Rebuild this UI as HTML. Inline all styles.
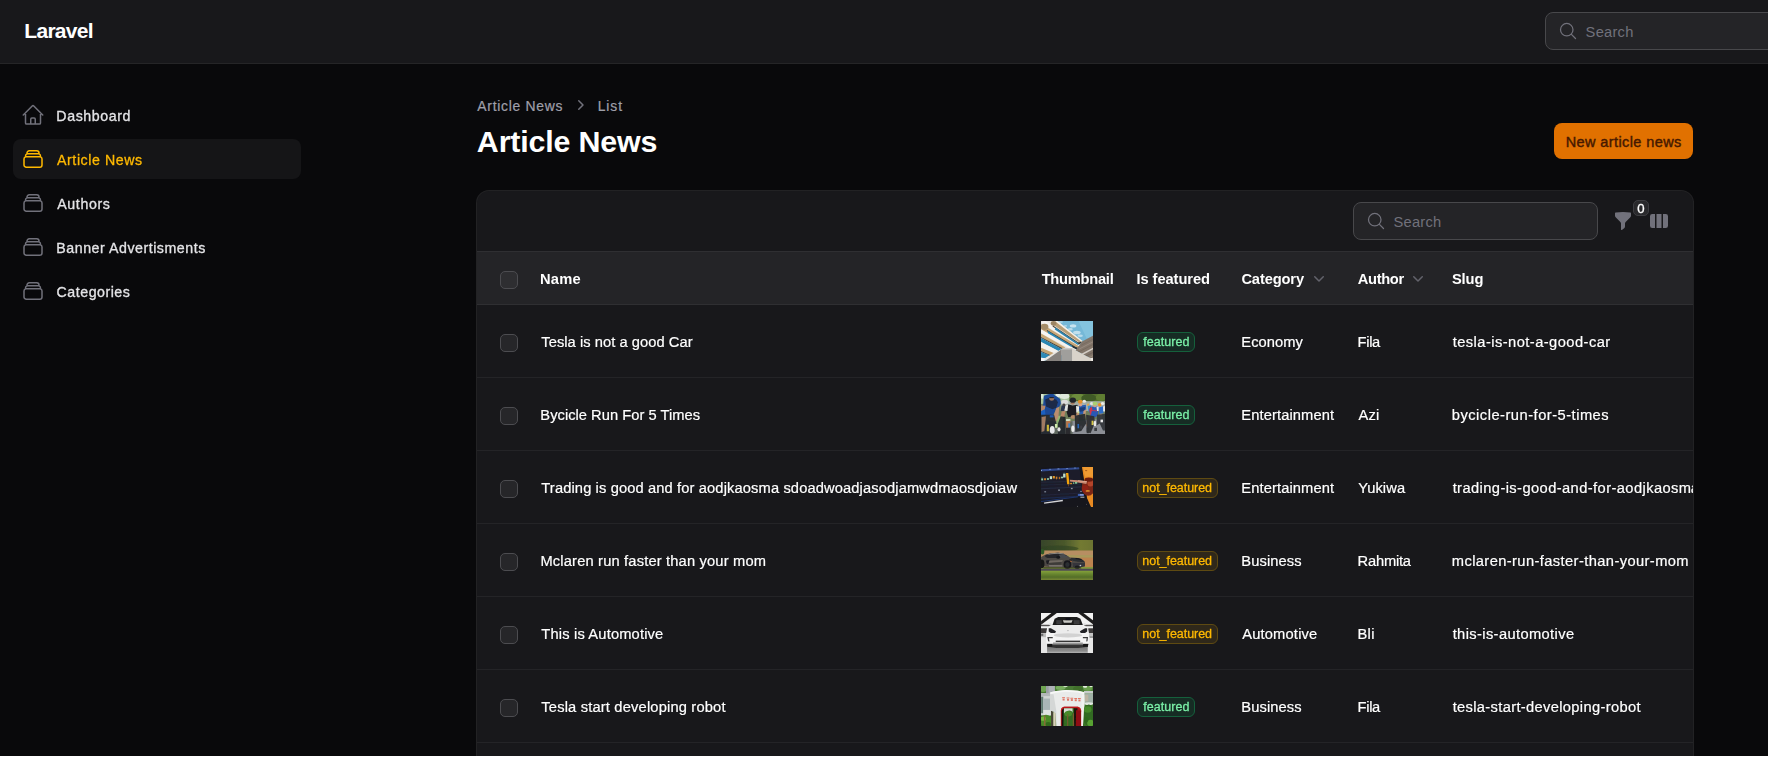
<!DOCTYPE html>
<html lang="en">
<head>
<meta charset="utf-8">
<title>Article News - Laravel</title>
<style>
*{box-sizing:border-box}
html,body{margin:0;padding:0;background:#fff}
body{width:1768px;height:774px;overflow:hidden;position:relative;font-family:"Liberation Sans",sans-serif;font-size:14px;color:#fff}
#app{position:absolute;left:0;top:0;width:1768px;height:756px;background:#09090b;overflow:hidden}
.abs{position:absolute}
.t{position:absolute;white-space:pre;line-height:20px;z-index:5}
#glayer{position:absolute;left:0;top:0;width:1768px;height:756px;will-change:transform;z-index:5}
svg{display:block;position:absolute}
/* topbar */
#topbar{position:absolute;left:0;top:0;width:1768px;height:63px;background:#18181b}
#topline{position:absolute;left:0;top:63px;width:1768px;height:1px;background:#252527}
.input{position:absolute;background:#242427;border:1px solid #48484b;border-radius:8px}
/* sidebar */
.nav-active{position:absolute;left:13px;top:139px;width:288px;height:40px;border-radius:8px;background:#151517}
/* button */
#newbtn{position:absolute;left:1554px;top:123px;width:139px;height:36px;border-radius:8px;background:#e17100}
/* table */
#card{position:absolute;left:476px;top:190px;width:1218px;height:640px;border-radius:13px;background:#222224}
#cardin{position:absolute;left:1px;top:1px;width:1216px;height:640px;border-radius:12px 12px 0 0;background:#18181b;overflow:hidden}
.hline{position:absolute;left:0;width:1216px;height:1px}
#thead{position:absolute;left:0;top:61px;width:1216px;height:52px;background:#242427}
.cb{position:absolute;width:18px;height:18px;border-radius:5px;border:1px solid #4c4c50;background:#262629}
.badge{position:absolute;height:20px;border-radius:6px;border:1px solid}
.badge.g{background:#162c24;border-color:#15603c}
.badge.y{background:#2f281a;border-color:#5e4a12}
#mask{position:absolute;left:1694px;top:64px;width:74px;height:700px;background:#09090b;z-index:9}
.thumb{position:absolute;overflow:hidden}
</style>
</head>
<body>
<div id="app">
  <header id="topbar"></header>
  <div id="topline"></div>
  <div class="input" style="left:1545px;top:12px;width:260px;height:38px"></div>
  <svg style="left:1558px;top:21px" width="20" height="20" viewBox="0 0 24 24" fill="none" stroke="#71717b" stroke-width="1.5" stroke-linecap="round" stroke-linejoin="round"><path d="m21 21-5.197-5.197m0 0A7.5 7.5 0 1 0 5.196 5.196a7.5 7.5 0 0 0 10.607 10.607Z"/></svg>

  <nav id="sidebar">
    <div class="nav-active"></div>
    <svg style="left:21px;top:103px" width="24" height="24" viewBox="0 0 24 24" fill="none" stroke="#71717b" stroke-width="1.5" stroke-linecap="round" stroke-linejoin="round"><path d="m2.25 12 8.954-8.955c.44-.439 1.152-.439 1.591 0L21.75 12M4.5 9.75v10.125c0 .621.504 1.125 1.125 1.125H9.75v-4.875c0-.621.504-1.125 1.125-1.125h2.25c.621 0 1.125.504 1.125 1.125V21h4.125c.621 0 1.125-.504 1.125-1.125V9.75M8.25 21h8.25"/></svg>
    <svg style="left:21px;top:147px" width="24" height="24" viewBox="0 0 24 24" fill="none" stroke="#ffb900" stroke-width="1.5" stroke-linecap="round" stroke-linejoin="round"><path d="M6 6.878V6a2.25 2.25 0 0 1 2.25-2.25h7.5A2.25 2.25 0 0 1 18 6v.878m-12 0c.235-.083.487-.128.75-.128h10.5c.263 0 .515.045.75.128m-12 0A2.25 2.25 0 0 0 4.500 9v.878m13.500-3A2.250 2.250 0 0 1 19.500 9v.878m0 0a2.246 2.246 0 0 0-.75-.128H5.250c-.263 0-.515.045-.75.128m15 0A2.250 2.250 0 0 1 21 12v6a2.250 2.250 0 0 1-2.250 2.250H5.250A2.250 2.250 0 0 1 3 18v-6c0-.98.626-1.813 1.500-2.122"/></svg>
    <svg style="left:21px;top:191px" width="24" height="24" viewBox="0 0 24 24" fill="none" stroke="#71717b" stroke-width="1.5" stroke-linecap="round" stroke-linejoin="round"><path d="M6 6.878V6a2.25 2.25 0 0 1 2.25-2.25h7.5A2.25 2.25 0 0 1 18 6v.878m-12 0c.235-.083.487-.128.75-.128h10.5c.263 0 .515.045.75.128m-12 0A2.25 2.25 0 0 0 4.500 9v.878m13.500-3A2.250 2.250 0 0 1 19.500 9v.878m0 0a2.246 2.246 0 0 0-.75-.128H5.250c-.263 0-.515.045-.75.128m15 0A2.250 2.250 0 0 1 21 12v6a2.250 2.250 0 0 1-2.250 2.250H5.250A2.250 2.250 0 0 1 3 18v-6c0-.98.626-1.813 1.500-2.122"/></svg>
    <svg style="left:21px;top:235px" width="24" height="24" viewBox="0 0 24 24" fill="none" stroke="#71717b" stroke-width="1.5" stroke-linecap="round" stroke-linejoin="round"><path d="M6 6.878V6a2.25 2.25 0 0 1 2.25-2.25h7.5A2.25 2.25 0 0 1 18 6v.878m-12 0c.235-.083.487-.128.75-.128h10.5c.263 0 .515.045.75.128m-12 0A2.25 2.25 0 0 0 4.500 9v.878m13.500-3A2.250 2.250 0 0 1 19.500 9v.878m0 0a2.246 2.246 0 0 0-.75-.128H5.250c-.263 0-.515.045-.75.128m15 0A2.250 2.250 0 0 1 21 12v6a2.250 2.250 0 0 1-2.250 2.250H5.250A2.250 2.250 0 0 1 3 18v-6c0-.98.626-1.813 1.500-2.122"/></svg>
    <svg style="left:21px;top:279px" width="24" height="24" viewBox="0 0 24 24" fill="none" stroke="#71717b" stroke-width="1.5" stroke-linecap="round" stroke-linejoin="round"><path d="M6 6.878V6a2.25 2.25 0 0 1 2.25-2.25h7.5A2.25 2.25 0 0 1 18 6v.878m-12 0c.235-.083.487-.128.75-.128h10.5c.263 0 .515.045.75.128m-12 0A2.25 2.25 0 0 0 4.500 9v.878m13.500-3A2.250 2.250 0 0 1 19.500 9v.878m0 0a2.246 2.246 0 0 0-.75-.128H5.250c-.263 0-.515.045-.75.128m15 0A2.250 2.250 0 0 1 21 12v6a2.250 2.250 0 0 1-2.250 2.250H5.250A2.250 2.250 0 0 1 3 18v-6c0-.98.626-1.813 1.500-2.122"/></svg>

  </nav>

  <!-- breadcrumb chevron -->
  <svg style="left:570px;top:95px" width="20" height="20" viewBox="0 0 20 20" fill="#71717b"><path fill-rule="evenodd" clip-rule="evenodd" d="M8.22 5.22a.75.75 0 0 1 1.06 0l4.25 4.25a.75.75 0 0 1 0 1.06l-4.25 4.25a.75.75 0 0 1-1.06-1.06L11.94 10 8.22 6.28a.75.75 0 0 1 0-1.06Z"/></svg>

  <div id="newbtn"></div>

  <section id="card"><div id="cardin">
    <div class="hline" style="top:60px;background:#2f2f32"></div>
    <div id="thead"></div>
    <div class="hline" style="top:113px;background:#2f2f32"></div>
    <div class="cb" style="left:23px;top:80px;background:#2e2e31"></div>
    <div class="cb" style="left:23px;top:143px"></div>
    <div class="thumb" id="th0" style="left:564px;top:130px;width:52px;height:40px;background:#888"><svg width="52" height="40" viewBox="0 0 52 40" style="left:0;top:0"><defs><filter id="bl0" x="-10%" y="-10%" width="120%" height="120%"><feGaussianBlur stdDeviation="0.4"/></filter></defs><g filter="url(#bl0)"><rect x="-1.00" y="-1.00" width="54.26" height="42.32" fill="#74b8d7" /><polygon points="36.98,-1.00 53.26,-1.00 53.26,15.28 45.66,17.45" fill="#84c3de" /><ellipse cx="32.10" cy="4.97" rx="3.26" ry="1.63" fill="#d6eaf3" opacity="0.85"/><ellipse cx="29.39" cy="8.23" rx="2.44" ry="1.19" fill="#d6eaf3" opacity="0.7"/><ellipse cx="35.90" cy="11.48" rx="3.80" ry="1.74" fill="#d6eaf3" opacity="0.8"/><ellipse cx="39.15" cy="14.74" rx="2.71" ry="1.19" fill="#d6eaf3" opacity="0.7"/><ellipse cx="24.50" cy="4.97" rx="1.63" ry="0.87" fill="#d6eaf3" opacity="0.6"/><ellipse cx="19.62" cy="0.90" rx="2.44" ry="0.76" fill="#d6eaf3" opacity="0.7"/><polygon points="-1.00,-1.00 15.28,-1.00 41.05,20.27 34.81,29.39 -1.00,41.32" fill="#e9e6e1" /><polygon points="3.34,-1.00 39.42,24.50 38.88,26.02 0.09,1.71" fill="#f5f3f0" /><polygon points="15.55,-0.35 41.32,20.27 39.15,22.06 10.67,2.80" fill="#b99e75" /><polygon points="15.28,-1.00 41.60,19.89 40.51,20.71 13.65,-0.02" fill="#f4f1ec" /><ellipse cx="12.57" cy="2.37" rx="2.82" ry="2.28" fill="#9b8463" /><polygon points="12.02,4.43 38.88,22.44 38.18,23.31 11.59,5.40" fill="#4a4238" /><polygon points="14.47,6.60 38.07,22.88 36.98,24.07 13.76,8.50" fill="#2a84b0" /><polygon points="0.63,3.07 38.88,25.70 36.44,27.22 0.09,9.04" fill="#c6a677" /><ellipse cx="3.61" cy="5.78" rx="3.80" ry="3.15" fill="#a58d69" /><polygon points="6.06,9.04 36.44,26.95 34.81,27.76 5.78,10.12" fill="#3c3a36" /><polygon points="6.60,9.85 31.56,25.05 29.39,26.95 7.14,13.11" fill="#2c88b4" /><polygon points="0.09,8.23 32.10,26.95 28.30,27.22 0.09,12.57" fill="#f6f4f1" /><polygon points="0.09,12.57 24.50,26.40 21.79,27.49 0.09,15.93" fill="#c9a876" /><polygon points="0.09,15.93 21.79,27.33 20.71,28.30 0.09,16.91" fill="#4b4439" /><polygon points="0.09,16.91 20.71,28.03 16.91,29.93 0.09,20.98" fill="#2b86b3" /><polygon points="0.09,20.98 17.18,29.66 12.57,32.10 0.09,26.78" fill="#f3f1ee" /><polygon points="0.09,26.78 12.57,31.99 9.31,34.00 0.09,29.93" fill="#c5a472" /><polygon points="0.09,29.93 9.31,33.89 8.23,34.54 0.09,31.01" fill="#4a4238" /><polygon points="0.09,31.01 8.50,34.27 3.88,37.25 0.09,36.98" fill="#2d89b6" /><polygon points="-1.00,36.44 4.16,37.25 2.26,41.32 -1.00,41.32" fill="#f4f4f6" /><polygon points="31.01,25.05 38.07,27.22 36.44,28.84 31.56,26.40" fill="#22313b" /><polygon points="36.98,21.52 40.78,20.71 40.24,22.06 37.80,23.42" fill="#2f3a40" /><polygon points="41.05,20.43 53.26,14.09 53.26,36.98 49.46,37.25 34.54,29.50" fill="#83766b" /><line x1="53.26" y1="17.45" x2="40.24" y2="24.29" stroke="#6e6258" stroke-width="0.49" /><line x1="53.26" y1="20.16" x2="38.07" y2="28.14" stroke="#9e9186" stroke-width="0.76" /><line x1="53.26" y1="22.88" x2="36.98" y2="31.39" stroke="#6c6056" stroke-width="0.54" /><line x1="53.26" y1="26.95" x2="40.78" y2="33.51" stroke="#d3ccc4" stroke-width="1.52" /><line x1="53.26" y1="30.74" x2="44.58" y2="35.30" stroke="#74685e" stroke-width="1.19" /><line x1="53.26" y1="34.00" x2="47.84" y2="36.82" stroke="#a39789" stroke-width="0.65" /><polygon points="2.26,41.32 20.71,28.30 20.71,41.32" fill="#86827e" /><polygon points="31.01,26.95 34.81,29.39 49.46,37.25 53.26,36.98 53.26,41.32 31.01,41.32" fill="#d9d3ca" /><rect x="20.71" y="27.65" width="10.31" height="13.67" fill="#a09f9c" /><rect x="20.71" y="27.65" width="10.31" height="0.92" fill="#c4c2bf" /><polygon points="49.46,37.25 53.26,36.44 53.26,41.32 51.09,41.32" fill="#efebe6" /></g></svg></div>
    <div class="badge g" style="left:660px;top:141px;width:58px"></div>
    <div class="hline" style="top:186px;background:#242427"></div>
    <div class="cb" style="left:23px;top:216px"></div>
    <div class="thumb" id="th1" style="left:564px;top:203px;width:64px;height:40px;background:#888"><svg width="64" height="40" viewBox="0 0 64 40" style="left:0;top:0"><defs><filter id="bl1" x="-10%" y="-10%" width="120%" height="120%"><feGaussianBlur stdDeviation="0.7"/></filter></defs><g filter="url(#bl1)"><rect x="-1.00" y="-1.00" width="66.23" height="42.35" fill="#6f7f5a" /><rect x="-1.00" y="-1.00" width="30.40" height="10.86" fill="#a8c49c" /><rect x="28.32" y="-1.00" width="36.92" height="10.31" fill="#55702f" /><ellipse cx="37.00" cy="2.80" rx="6.51" ry="3.26" fill="#6d8c3c" /><ellipse cx="47.86" cy="3.89" rx="7.60" ry="3.80" fill="#3f5a26" /><ellipse cx="59.80" cy="3.34" rx="4.89" ry="3.80" fill="#5f7d30" /><ellipse cx="23.43" cy="2.26" rx="4.89" ry="2.71" fill="#dfe9dc" /><ellipse cx="16.92" cy="1.17" rx="2.17" ry="2.17" fill="#e9efe8" /><ellipse cx="1.17" cy="2.26" rx="1.63" ry="2.71" fill="#dbe8d4" /><rect x="19.63" y="7.14" width="45.60" height="9.77" fill="#b9c0c6" opacity="0.75"/><polygon points="29.40,27.23 65.23,24.52 65.23,41.35 29.40,41.35" fill="#8c8f96" /><rect x="-1.00" y="27.23" width="32.57" height="14.12" fill="#5f675f" /><rect x="15.29" y="21.80" width="6.51" height="11.94" fill="#9fd07a" opacity="0.7"/><ellipse cx="43.25" cy="7.25" rx="1.85" ry="1.52" fill="#e6e6e6" /><ellipse cx="61.54" cy="9.42" rx="1.85" ry="1.52" fill="#ecebe6" /><ellipse cx="50.58" cy="9.59" rx="1.63" ry="1.52" fill="#dfe3e3" /><ellipse cx="47.05" cy="10.67" rx="0.98" ry="1.19" fill="#e8a23a" /><polygon points="46.78,12.03 50.03,11.22 50.58,16.92 47.32,17.46" fill="#3d8fd0" /><polygon points="37.82,11.76 44.88,10.67 45.15,15.29 43.52,19.63 38.36,20.72" fill="#2a5cae" /><polygon points="38.63,13.66 44.06,13.12 43.52,16.92 38.90,17.73" fill="#1e3c78" /><ellipse cx="39.45" cy="10.84" rx="1.74" ry="1.63" fill="#d8a08a" /><ellipse cx="39.17" cy="7.69" rx="2.39" ry="1.95" fill="#e5902b" /><polygon points="42.43,16.92 45.15,15.29 44.06,24.52 41.89,25.06" fill="#c89878" /><polygon points="49.22,12.84 57.36,12.30 57.09,20.72 54.38,23.43 49.76,22.35 48.13,16.92" fill="#2c58b4" /><polygon points="48.13,15.29 50.58,12.57 51.39,15.29 49.49,21.80" fill="#d2344c" /><polygon points="55.46,12.57 57.63,12.57 57.36,16.92 56.00,16.92" fill="#e9e2e4" /><line x1="50.58" y1="16.37" x2="56.00" y2="16.92" stroke="#b83a55" stroke-width="0.98" /><ellipse cx="53.83" cy="12.03" rx="1.63" ry="1.30" fill="#caa08a" /><ellipse cx="54.10" cy="9.59" rx="2.39" ry="1.95" fill="#a9d070" /><ellipse cx="49.49" cy="23.16" rx="1.41" ry="1.19" fill="#d7303c" /><polygon points="46.78,21.80 49.22,22.35 46.78,32.66 45.15,32.12" fill="#c2906e" /><polygon points="57.90,13.39 62.25,12.30 62.52,19.09 58.18,20.45" fill="#2f6cc6" /><ellipse cx="58.61" cy="10.67" rx="1.74" ry="1.74" fill="#e88f28" /><polygon points="61.98,12.57 64.15,12.03 64.15,17.46 62.25,17.46" fill="#e8e6e6" /><polygon points="58.72,19.63 61.43,19.63 60.89,24.52 58.99,24.52" fill="#c49a7c" /><ellipse cx="23.70" cy="7.96" rx="3.37" ry="2.17" fill="#dcdcdc" /><polygon points="20.45,11.49 24.52,10.67 23.70,16.92 19.63,16.92" fill="#2a3650" /><ellipse cx="22.89" cy="10.67" rx="1.41" ry="1.19" fill="#4a4040" /><polygon points="2.80,1.72 7.14,0.36 14.74,1.72 19.36,4.97 19.90,9.86 17.73,13.39 15.29,15.29 12.57,20.72 2.26,21.80 0.09,20.72 0.09,16.92 2.26,9.86" fill="#1f4a96" /><polygon points="4.16,5.52 7.69,3.89 15.29,5.52 16.92,8.23 15.29,13.66 11.49,15.29 4.97,12.57" fill="#1a2a4a" /><polygon points="0.09,11.49 4.43,11.76 2.80,20.72 0.09,20.17" fill="#b3876b" /><polygon points="15.29,13.93 18.27,12.84 17.46,22.89 15.29,27.23 12.03,27.23 12.57,21.80" fill="#bb8d70" /><ellipse cx="10.67" cy="4.70" rx="2.50" ry="1.95" fill="#9c7560" /><ellipse cx="10.51" cy="1.61" rx="3.37" ry="1.95" fill="#1d4a97" /><rect x="8.50" y="3.07" width="4.34" height="1.09" fill="#1b1d24" /><polygon points="0.09,16.92 3.89,15.29 4.43,20.72 0.09,21.80" fill="#1c5fc0" /><polygon points="26.96,10.13 31.57,11.49 36.19,10.67 37.27,13.12 36.46,18.55 34.56,22.07 27.23,23.16 25.60,18.00 26.15,12.57" fill="#1c1e22" /><polygon points="35.10,11.76 38.09,12.84 37.82,18.55 35.27,18.82" fill="#e8e9e6" /><polygon points="24.52,11.76 27.23,10.13 26.42,16.92 23.32,16.48" fill="#e2e4e2" /><polygon points="35.48,18.55 38.20,18.55 37.27,29.95 34.94,29.40" fill="#bd8c6c" /><polygon points="20.72,17.46 24.52,16.64 23.16,23.16 19.52,22.45" fill="#b98668" /><ellipse cx="31.57" cy="9.32" rx="1.95" ry="1.41" fill="#a87c64" /><ellipse cx="31.85" cy="6.17" rx="3.15" ry="2.61" fill="#24272c" /><rect x="36.46" y="17.46" width="1.90" height="1.74" fill="#cfe08a" /><ellipse cx="32.23" cy="22.89" rx="2.61" ry="1.95" fill="#b48a66" /><rect x="25.06" y="25.06" width="4.34" height="2.17" fill="#cfe0c8" /><polygon points="25.06,27.23 29.40,26.69 28.59,34.29 25.33,34.29" fill="#b9764a" /><rect x="27.23" y="29.40" width="1.90" height="4.34" fill="#3b7ec4" /><polygon points="0.09,20.72 13.12,20.72 15.29,29.40 12.03,41.35 0.09,41.35" fill="#23272c" opacity="0.92"/><rect x="8.77" y="21.26" width="3.80" height="2.17" fill="#1f57b2" /><polygon points="0.63,22.89 4.97,22.35 3.34,37.00 0.63,38.09" fill="#a07a62" /><rect x="5.79" y="30.76" width="2.17" height="6.51" fill="#c9b53a" /><ellipse cx="11.22" cy="35.92" rx="2.50" ry="3.80" fill="#e6e6e8" /><rect x="13.93" y="29.95" width="2.17" height="3.80" fill="#cfe8b0" /><polygon points="19.63,22.35 24.52,22.89 24.52,41.35 16.92,41.35 16.92,29.40" fill="#22252a" opacity="0.92"/><ellipse cx="18.00" cy="35.37" rx="1.52" ry="2.17" fill="#e4e4e4" /><polygon points="25.06,33.75 29.40,33.75 29.40,41.35 24.52,41.35" fill="#2b2b2e" /><ellipse cx="31.85" cy="34.83" rx="1.63" ry="3.26" fill="#ececec" /><polygon points="33.75,21.80 44.06,19.63 45.15,29.40 40.26,37.00 34.29,38.09" fill="#25282c" opacity="0.92"/><rect x="36.46" y="29.95" width="1.63" height="4.34" fill="#2a68b8" /><polygon points="45.15,20.72 53.29,22.35 53.83,29.40 49.49,39.17 45.69,38.09" fill="#2a2d31" opacity="0.92"/><rect x="50.58" y="26.69" width="1.90" height="4.34" fill="#d8c84a" /><ellipse cx="53.94" cy="29.40" rx="1.41" ry="2.71" fill="#e8e8e8" /><polygon points="56.00,20.72 64.15,19.63 64.15,36.46 61.98,36.46 58.72,29.40 55.46,31.57" fill="#30343a" opacity="0.92"/><rect x="59.53" y="25.60" width="2.44" height="2.71" fill="#ededed" /><rect x="53.29" y="33.75" width="2.71" height="3.26" fill="#3a3d42" /><rect x="45.69" y="33.75" width="2.17" height="5.43" fill="#2d3034" /><rect x="39.17" y="31.57" width="2.17" height="3.26" fill="#3a3d42" /></g></svg></div>
    <div class="badge g" style="left:660px;top:214px;width:58px"></div>
    <div class="hline" style="top:259px;background:#242427"></div>
    <div class="cb" style="left:23px;top:289px"></div>
    <div class="thumb" id="th2" style="left:564px;top:276px;width:52px;height:40px;background:#888"><svg width="52" height="40" viewBox="0 0 52 40" style="left:0;top:0"><defs><filter id="bl2" x="-10%" y="-10%" width="120%" height="120%"><feGaussianBlur stdDeviation="0.55"/></filter></defs><g filter="url(#bl2)"><rect x="-1.00" y="-1.00" width="54.26" height="42.32" fill="#1b1e2c" /><polygon points="-1.00,-1.00 40.24,-1.00 40.24,0.63 -1.00,2.26" fill="#14151b" /><polygon points="-1.00,2.15 38.34,0.20 38.34,2.15 -1.00,4.43" fill="#30498c" /><ellipse cx="9.04" cy="2.30" rx="1.19" ry="0.54" fill="#6783c0" /><ellipse cx="17.45" cy="1.88" rx="1.19" ry="0.54" fill="#6783c0" /><ellipse cx="26.13" cy="1.44" rx="1.19" ry="0.54" fill="#6783c0" /><ellipse cx="34.00" cy="1.05" rx="1.19" ry="0.54" fill="#6783c0" /><ellipse cx="0.52" cy="3.45" rx="0.54" ry="0.54" fill="#a8c0f0" /><line x1="-1.00" y1="15.28" x2="40.24" y2="14.19" stroke="#262a3c" stroke-width="0.76" /><line x1="-1.00" y1="17.99" x2="40.24" y2="16.91" stroke="#23273a" stroke-width="0.76" /><line x1="-1.00" y1="21.79" x2="40.24" y2="19.89" stroke="#2a2f47" stroke-width="0.76" /><line x1="-1.00" y1="28.30" x2="40.24" y2="26.13" stroke="#242840" stroke-width="0.76" /><line x1="-1.00" y1="31.56" x2="40.24" y2="29.12" stroke="#20305c" stroke-width="0.76" /><polygon points="-1.00,33.73 38.07,29.39 45.66,29.39 51.09,41.32 -1.00,41.32" fill="#16171b" /><line x1="0.09" y1="34.54" x2="36.98" y2="29.82" stroke="#1f3878" stroke-width="0.87" /><line x1="3.07" y1="36.17" x2="21.79" y2="33.46" stroke="#d4d4d8" stroke-width="1.41" /><polygon points="40.51,-1.00 53.26,-1.00 53.26,41.32 50.55,41.32 46.21,31.56 44.04,21.79 42.41,12.02" fill="#e88a22" /><polygon points="41.87,-1.00 53.26,-1.00 53.26,9.85 44.04,9.85" fill="#f2a238" opacity="0.7"/><ellipse cx="45.12" cy="3.61" rx="1.19" ry="0.54" fill="#a85a18" /><polygon points="38.34,-1.00 40.78,-1.00 43.06,13.11 45.66,29.39 42.41,29.39 40.24,15.28" fill="#15161a" /><ellipse cx="47.29" cy="20.16" rx="6.51" ry="8.68" fill="#7b2716" /><ellipse cx="49.46" cy="16.36" rx="2.98" ry="3.26" fill="#b8472c" opacity="0.92"/><ellipse cx="44.04" cy="21.79" rx="3.26" ry="3.80" fill="#8e2414" /><ellipse cx="46.75" cy="23.96" rx="2.17" ry="0.87" fill="#d88a28" /><ellipse cx="47.84" cy="12.57" rx="4.34" ry="2.17" fill="#6b1f10" /><polygon points="28.57,12.67 36.98,13.22 45.94,14.30 45.39,17.02 36.98,15.55 29.12,14.47" fill="#c98a72" /><polygon points="36.98,13.22 45.94,14.30 45.66,15.28 36.98,14.19" fill="#dba58e" /><rect x="0.20" y="11.37" width="1.95" height="2.06" fill="#9fd9b0" opacity="0.92"/><rect x="5.95" y="11.05" width="2.06" height="1.95" fill="#86c09a" opacity="0.92"/><rect x="8.77" y="9.20" width="2.28" height="2.93" fill="#d3f2dc" opacity="0.92"/><rect x="19.89" y="9.64" width="2.22" height="1.63" fill="#a6dcb6" opacity="0.92"/><rect x="22.12" y="6.60" width="2.39" height="3.91" fill="#cfeeda" opacity="0.92"/><rect x="32.10" y="15.28" width="1.19" height="1.74" fill="#7cc890" opacity="0.92"/><rect x="34.00" y="14.95" width="2.22" height="1.74" fill="#8ad09c" opacity="0.92"/><rect x="3.02" y="11.26" width="2.06" height="1.95" fill="#e08a2c" opacity="0.92"/><rect x="11.70" y="8.99" width="2.17" height="2.50" fill="#f0a028" opacity="0.92"/><rect x="14.74" y="9.64" width="1.63" height="2.28" fill="#e08a2c" opacity="0.92"/><rect x="17.78" y="9.85" width="1.41" height="2.28" fill="#c87428" opacity="0.92"/><rect x="29.12" y="15.82" width="2.01" height="1.41" fill="#e6962a" opacity="0.92"/><line x1="15.55" y1="11.48" x2="15.55" y2="12.84" stroke="#b86a28" stroke-width="0.43" /><line x1="27.49" y1="17.45" x2="27.49" y2="19.35" stroke="#a85a28" stroke-width="0.54" /><line x1="23.15" y1="5.51" x2="23.15" y2="6.60" stroke="#7cc890" stroke-width="0.43" /><line x1="0.90" y1="10.12" x2="0.90" y2="11.37" stroke="#5aa070" stroke-width="0.43" /><polygon points="24.94,5.95 27.33,5.95 28.46,17.23 26.13,17.23" fill="#f4a40c" /><rect x="3.29" y="24.12" width="1.79" height="1.30" fill="#9aa0b2" opacity="0.75"/><rect x="17.12" y="22.50" width="1.84" height="1.41" fill="#a6acba" opacity="0.75"/><rect x="29.88" y="20.87" width="1.79" height="1.30" fill="#b0b4c2" opacity="0.75"/><rect x="39.10" y="23.85" width="1.79" height="1.14" fill="#8f98b4" opacity="0.75"/><rect x="39.37" y="29.55" width="4.02" height="1.41" fill="#b4b8c0" opacity="0.75"/><rect x="36.87" y="26.89" width="6.19" height="2.06" fill="#3d5cb0" /><rect x="38.88" y="27.33" width="3.53" height="1.09" fill="#a8b8e0" /><ellipse cx="36.44" cy="39.26" rx="0.54" ry="0.43" fill="#8a8a90" /><ellipse cx="45.39" cy="37.25" rx="0.54" ry="0.43" fill="#6a6a72" /></g></svg></div>
    <div class="badge y" style="left:660px;top:287px;width:81px"></div>
    <div class="hline" style="top:332px;background:#242427"></div>
    <div class="cb" style="left:23px;top:362px"></div>
    <div class="thumb" id="th3" style="left:564px;top:349px;width:52px;height:40px;background:#888"><svg width="52" height="40" viewBox="0 0 52 40" style="left:0;top:0"><defs><filter id="bl3" x="-10%" y="-10%" width="120%" height="120%"><feGaussianBlur stdDeviation="0.6"/></filter></defs><g filter="url(#bl3)"><defs><linearGradient id="g3a" x1="0" y1="0" x2="1" y2="0"><stop offset="0" stop-color="#36442a"/><stop offset="0.45" stop-color="#4a582c"/><stop offset="0.75" stop-color="#737a33"/><stop offset="1" stop-color="#6b7330"/></linearGradient><linearGradient id="g3b" x1="0" y1="0" x2="0" y2="1"><stop offset="0" stop-color="#86a23a"/><stop offset="0.3" stop-color="#69872f"/><stop offset="0.6" stop-color="#546e29"/><stop offset="1" stop-color="#88923a"/></linearGradient></defs><rect x="-1.00" y="-1.00" width="54.26" height="13.56" fill="url(#g3a)" /><ellipse cx="16.91" cy="8.50" rx="20.62" ry="2.98" fill="#2f4222" opacity="0.6"/><rect x="-1.00" y="10.67" width="54.26" height="17.63" fill="#b0895a" /><rect x="3.34" y="10.67" width="49.92" height="4.61" fill="#b78e62" /><rect x="26.13" y="15.01" width="27.13" height="2.71" fill="#a99a5c" opacity="0.92"/><rect x="40.24" y="17.72" width="13.02" height="9.50" fill="#bd8350" /><ellipse cx="1.44" cy="11.75" rx="1.90" ry="2.71" fill="#2f5a26" /><rect x="-1.00" y="26.95" width="54.26" height="2.44" fill="#83993a" /><rect x="-1.00" y="28.74" width="54.26" height="2.28" fill="#4d4a55" /><rect x="-1.00" y="30.74" width="54.26" height="10.58" fill="url(#g3b)" /><path d="M0.09 16.91 L4.16 14.74 L9.85 13.22 L16.91 12.67 L21.79 13.22 L27.22 16.26 L29.39 17.72 L36.98 18.10 L41.87 19.89 L44.04 22.33 L43.93 26.13 L39.15 27.22 L29.39 27.49 L21.79 26.95 L8.77 26.95 L2.26 26.40 L0.09 26.13 Z" fill="#4e4a45" stroke="none" stroke-width="0.00" /><path d="M4.43 15.01 L9.85 13.38 L16.91 12.84 L21.79 13.38 L26.13 15.93 L22.33 16.91 L15.28 18.10 L6.60 17.99 L4.16 16.91 Z" fill="#25262a" stroke="none" stroke-width="0.00" /><path d="M9.85 13.22 L16.91 12.67 L21.79 13.22 L24.50 14.85 L16.91 13.76 L9.85 14.19 L5.51 15.17 Z" fill="#8a8680" stroke="none" stroke-width="0.00" /><path d="M17.72 14.74 L22.33 14.19 L27.22 16.64 L24.50 17.72 L19.62 17.99 Z" fill="#4a4c50" stroke="none" stroke-width="0.00" /><ellipse cx="17.18" cy="17.45" rx="1.95" ry="1.41" fill="#18191c" /><path d="M7.14 20.71 L21.79 19.89 L21.25 21.79 L7.68 22.88 Z" fill="#6f6962" stroke="none" stroke-width="0.00" /><path d="M7.14 22.88 L20.71 22.33 L19.89 24.50 L8.77 24.77 Z" fill="#3d3a38" stroke="none" stroke-width="0.00" /><path d="M4.97 20.43 L8.50 19.89 L7.14 24.50 L5.51 23.42 Z" fill="#1d1d20" stroke="none" stroke-width="0.00" /><path d="M7.68 25.05 L21.25 24.94 L21.52 26.78 L8.23 26.78 Z" fill="#77726c" stroke="none" stroke-width="0.00" /><path d="M29.39 17.72 L36.98 18.10 L41.87 19.89 L44.04 22.33 L36.98 21.79 L31.56 20.71 Z" fill="#2c2d31" stroke="none" stroke-width="0.00" /><path d="M28.30 19.19 L31.01 19.40 L30.74 20.71 L28.57 20.60 Z" fill="#1b1c1f" stroke="none" stroke-width="0.00" /><ellipse cx="29.66" cy="21.52" rx="0.98" ry="0.76" fill="#e0783a" /><path d="M31.56 22.88 L43.93 22.88 L43.82 26.13 L39.15 27.22 L32.10 26.95 Z" fill="#34343a" stroke="none" stroke-width="0.00" /><ellipse cx="39.42" cy="25.48" rx="0.87" ry="0.65" fill="#c8ccd4" /><path d="M34.27 17.99 L40.24 18.81 L40.78 19.89 L34.81 19.08 Z" fill="#15161a" stroke="none" stroke-width="0.00" /><ellipse cx="26.40" cy="24.50" rx="3.91" ry="4.23" fill="#17181b" /><ellipse cx="26.40" cy="24.61" rx="2.17" ry="2.50" fill="#2c2d30" /><ellipse cx="0.63" cy="23.96" rx="2.82" ry="4.34" fill="#141518" /><ellipse cx="36.17" cy="27.22" rx="2.44" ry="1.63" fill="#1b1c1f" /><rect x="2.26" y="26.95" width="37.98" height="1.63" fill="#2a2c22" opacity="0.6"/></g></svg></div>
    <div class="badge y" style="left:660px;top:360px;width:81px"></div>
    <div class="hline" style="top:405px;background:#242427"></div>
    <div class="cb" style="left:23px;top:435px"></div>
    <div class="thumb" id="th4" style="left:564px;top:422px;width:52px;height:40px;background:#888"><svg width="52" height="40" viewBox="0 0 52 40" style="left:0;top:0"><defs><filter id="bl4" x="-10%" y="-10%" width="120%" height="120%"><feGaussianBlur stdDeviation="0.5"/></filter></defs><g filter="url(#bl4)"><defs><linearGradient id="g4a" x1="0" y1="0" x2="0" y2="1"><stop offset="0" stop-color="#cfcfcf"/><stop offset="0.3" stop-color="#7a7a7a"/><stop offset="0.65" stop-color="#8c8c8c"/><stop offset="1" stop-color="#cdcdcd"/></linearGradient></defs><rect x="-1.00" y="-1.00" width="54.26" height="42.32" fill="#f2f2f2" /><rect x="-1.00" y="15.28" width="7.05" height="4.88" fill="#3a3838" /><rect x="47.29" y="15.28" width="5.97" height="4.88" fill="#3a3838" /><rect x="-1.00" y="11.75" width="10.85" height="1.47" fill="#555252" /><rect x="42.95" y="11.75" width="10.31" height="1.47" fill="#555252" /><rect x="-1.00" y="20.16" width="5.97" height="4.34" fill="#bcbcbc" /><rect x="47.84" y="20.16" width="5.43" height="4.34" fill="#c4c4c4" /><rect x="48.65" y="23.69" width="4.61" height="1.36" fill="#4a4a4a" /><rect x="0.09" y="20.71" width="2.17" height="2.17" fill="#6a6a6a" /><polygon points="11.75,-1.00 17.18,-1.00 0.09,11.75 0.09,7.95" fill="#1f1c1c" /><polygon points="35.90,-1.00 41.05,-1.00 53.26,8.23 53.26,12.30" fill="#1f1c1c" /><rect x="-1.00" y="31.56" width="54.26" height="9.77" fill="url(#g4a)" /><polygon points="-1.00,24.50 6.06,24.50 6.06,41.32 -1.00,41.32" fill="#e6e6e6" /><polygon points="46.75,24.50 53.26,24.50 53.26,41.32 46.75,41.32" fill="#e8e8e8" /><path d="M6.06 31.01 L47.29 31.01 L46.75 33.73 L36.98 35.08 L15.28 35.08 L6.60 33.73 Z" fill="#303030" stroke="none" stroke-width="0.00" /><path d="M12.57 4.97 L16.91 3.23 L35.90 3.23 L40.24 4.97 L42.41 12.02 L46.75 15.28 L48.11 20.71 L47.84 29.39 L46.75 31.56 L6.06 31.56 L5.24 29.39 L4.97 20.71 L6.06 15.28 L9.85 12.02 Z" fill="#f4f4f4" stroke="none" stroke-width="0.00" /><path d="M13.65 5.78 L17.18 3.99 L35.90 3.99 L39.42 5.78 L41.87 12.02 L11.48 12.02 Z" fill="#1c1c1e" stroke="none" stroke-width="0.00" /><path d="M21.79 7.14 L31.56 7.14 L30.47 9.85 L22.88 9.85 Z" fill="#c9c9c4" stroke="none" stroke-width="0.00" /><rect x="15.28" y="7.14" width="5.43" height="4.07" fill="#3a3a3c" /><rect x="32.64" y="7.14" width="5.97" height="4.07" fill="#3a3a3c" /><rect x="24.50" y="4.97" width="4.88" height="2.17" fill="#101012" /><ellipse cx="9.31" cy="11.21" rx="1.19" ry="1.19" fill="#e0e0e0" /><ellipse cx="43.60" cy="11.21" rx="1.19" ry="1.19" fill="#e0e0e0" /><path d="M11.48 12.30 L41.87 12.30 L44.04 16.91 L39.15 20.71 L14.19 20.71 L8.77 16.91 Z" fill="#ececec" stroke="none" stroke-width="0.00" /><ellipse cx="26.95" cy="22.33" rx="14.11" ry="2.17" fill="#d2d2d2" /><ellipse cx="26.95" cy="17.61" rx="0.98" ry="0.65" fill="#bdbdbd" /><path d="M7.68 15.28 L9.85 15.28 L15.01 18.26 L14.19 19.89 L9.85 19.89 L7.68 18.53 Z" fill="#242426" stroke="none" stroke-width="0.00" /><path d="M46.21 15.28 L44.04 15.28 L38.88 18.26 L39.70 19.89 L44.04 19.89 L46.21 18.53 Z" fill="#242426" stroke="none" stroke-width="0.00" /><path d="M6.33 24.07 L11.75 24.07 L11.75 25.15 L7.95 25.37 L8.50 28.57 L7.14 28.30 Z" fill="#3c3c3e" stroke="none" stroke-width="0.00" /><path d="M47.02 24.07 L41.87 24.07 L41.87 25.15 L45.66 25.37 L45.23 28.57 L46.48 28.30 Z" fill="#3c3c3e" stroke="none" stroke-width="0.00" /><rect x="14.74" y="27.65" width="24.42" height="1.30" fill="#2a2a2c" /><rect x="12.02" y="29.39" width="29.84" height="1.63" fill="#a8a8a8" /><rect x="6.06" y="30.74" width="41.24" height="1.36" fill="#6c6c6c" /><rect x="6.33" y="31.01" width="4.88" height="2.71" fill="#151515" /><rect x="42.14" y="31.01" width="4.88" height="2.71" fill="#151515" /></g></svg></div>
    <div class="badge y" style="left:660px;top:433px;width:81px"></div>
    <div class="hline" style="top:478px;background:#242427"></div>
    <div class="cb" style="left:23px;top:508px"></div>
    <div class="thumb" id="th5" style="left:564px;top:495px;width:52px;height:40px;background:#888"><svg width="52" height="40" viewBox="0 0 52 40" style="left:0;top:0"><defs><filter id="bl5" x="-10%" y="-10%" width="120%" height="120%"><feGaussianBlur stdDeviation="0.55"/></filter></defs><g filter="url(#bl5)"><rect x="-1.00" y="-1.00" width="54.26" height="42.32" fill="#3d7428" /><rect x="-1.00" y="-1.00" width="54.26" height="7.60" fill="#4b7e36" /><ellipse cx="2.26" cy="2.80" rx="3.26" ry="3.26" fill="#6fa552" /><ellipse cx="19.62" cy="1.71" rx="4.88" ry="2.17" fill="#78ad5e" /><ellipse cx="29.39" cy="1.44" rx="3.80" ry="1.90" fill="#4a7a34" /><ellipse cx="36.98" cy="2.80" rx="4.88" ry="2.71" fill="#3f6e2c" /><ellipse cx="46.75" cy="2.26" rx="4.34" ry="2.71" fill="#689e4c" /><ellipse cx="44.04" cy="0.63" rx="2.17" ry="1.09" fill="#e6efe2" /><ellipse cx="24.50" cy="0.36" rx="2.17" ry="0.81" fill="#cfe2c8" /><ellipse cx="50.01" cy="0.36" rx="1.63" ry="0.81" fill="#dfeadb" /><rect x="-1.00" y="7.14" width="10.85" height="22.25" fill="#cfd4d2" /><rect x="-1.00" y="7.14" width="10.85" height="2.98" fill="#b3b8b8" /><rect x="0.09" y="10.67" width="2.17" height="16.55" fill="#5f7a70" /><rect x="2.26" y="12.57" width="7.05" height="11.39" fill="#a9b6b6" /><rect x="2.26" y="23.96" width="7.60" height="5.43" fill="#dfe3e1" /><rect x="42.95" y="4.97" width="10.31" height="2.71" fill="#c7ccca" /><rect x="43.49" y="7.68" width="9.77" height="9.22" fill="#9fb0a6" /><rect x="44.04" y="8.77" width="3.26" height="6.51" fill="#c9b8a2" opacity="0.7"/><ellipse cx="47.84" cy="17.72" rx="4.34" ry="1.36" fill="#e3e8e2" /><rect x="5.08" y="-0.02" width="8.84" height="7.16" fill="#adb1b6" /><rect x="5.08" y="-0.02" width="2.60" height="7.16" fill="#9a9ea4" /><ellipse cx="4.97" cy="34.81" rx="5.97" ry="5.97" fill="#488a28" /><ellipse cx="2.26" cy="32.64" rx="2.71" ry="2.17" fill="#79b840" /><ellipse cx="7.14" cy="38.07" rx="2.71" ry="2.17" fill="#336a1c" /><ellipse cx="47.84" cy="29.39" rx="5.97" ry="10.85" fill="#316a20" /><ellipse cx="46.75" cy="23.42" rx="3.80" ry="3.26" fill="#478a2c" /><ellipse cx="49.46" cy="36.98" rx="3.26" ry="3.26" fill="#58a232" /><ellipse cx="45.12" cy="33.73" rx="2.17" ry="2.71" fill="#2f6a1e" /><ellipse cx="28.30" cy="31.56" rx="6.51" ry="8.68" fill="#336c20" /><ellipse cx="27.22" cy="27.22" rx="3.80" ry="3.26" fill="#488c2e" /><ellipse cx="25.05" cy="36.44" rx="2.17" ry="2.71" fill="#2c6a1c" /><ellipse cx="30.47" cy="24.50" rx="2.17" ry="1.63" fill="#6aae46" /><rect x="3.07" y="29.39" width="1.36" height="10.85" fill="#8a6a3a" /><rect x="26.13" y="28.30" width="1.09" height="11.94" fill="#7a5a30" /><rect x="31.83" y="27.22" width="1.09" height="13.02" fill="#8a5a34" /><rect x="22.88" y="22.33" width="8.68" height="4.88" fill="#dfe6e0" opacity="0.92"/><rect x="10.12" y="25.05" width="2.17" height="15.19" fill="#4a4438" /><rect x="12.30" y="26.13" width="2.44" height="14.11" fill="#d9cfb8" /><path d="M9.31 6.33 L15.28 5.08 L25.05 3.99 L36.98 4.86 L43.22 6.33 L43.60 16.91 L42.68 25.05 L41.87 41.32 L15.28 41.32 L14.74 27.22 L12.57 25.59 L9.04 24.50 Z" fill="#e9ebea" stroke="none" stroke-width="0.00" /><path d="M9.31 6.33 L15.28 5.08 L25.05 3.99 L36.98 4.86 L43.22 6.33 L43.22 8.23 L36.98 6.60 L25.05 5.78 L15.28 6.87 L9.31 8.23 Z" fill="#f6f7f6" stroke="none" stroke-width="0.00" /><path d="M9.04 8.23 L12.57 8.23 L15.28 25.05 L15.28 41.32 L14.74 27.22 L12.57 25.59 L9.04 24.50 Z" fill="#d4d7d6" stroke="none" stroke-width="0.00" /><path d="M40.78 8.23 L43.60 8.23 L43.60 16.91 L42.68 25.05 L41.87 41.32 L40.24 41.32 Z" fill="#f1f2f1" stroke="none" stroke-width="0.00" /><path d="M19.89 41.32 L19.89 24.50 L20.71 22.06 L22.88 20.81 L36.98 20.81 L39.15 22.06 L40.13 24.50 L40.13 41.32 Z" fill="#a51416" stroke="none" stroke-width="0.00" /><path d="M19.89 41.32 L19.89 24.50 L20.71 22.06 L22.88 20.81 L36.98 20.81 L39.15 22.06 L40.13 24.50 L40.13 26.13 L38.61 22.88 L36.44 21.79 L23.42 21.79 L21.52 23.15 L20.71 26.13 L20.71 41.32 Z" fill="#c41a1c" stroke="none" stroke-width="0.00" /><path d="M21.79 41.32 L21.79 24.50 L22.60 22.88 L23.96 22.22 L33.73 22.22 L33.73 41.32 Z" fill="#336c20" stroke="none" stroke-width="0.00" /><rect x="22.88" y="22.33" width="8.68" height="4.88" fill="#d5ddd6" /><ellipse cx="28.30" cy="32.64" rx="5.43" ry="8.14" fill="#336c20" /><ellipse cx="27.22" cy="27.76" rx="3.80" ry="2.71" fill="#468a2c" /><rect x="26.13" y="28.30" width="1.09" height="13.02" fill="#7a5a30" /><rect x="31.83" y="27.22" width="0.92" height="14.11" fill="#8a5a34" /><path d="M20.71 41.32 L20.71 25.05 L21.52 23.15 L22.88 22.33 L22.60 24.50 L22.44 41.32 Z" fill="#16100e" stroke="none" stroke-width="0.00" /><path d="M32.91 22.22 L36.44 22.22 L36.44 24.50 L35.08 24.50 L34.81 41.32 L33.19 41.32 Z" fill="#1a1210" stroke="none" stroke-width="0.00" /><rect x="35.08" y="24.50" width="4.88" height="16.82" fill="#8f1012" /><rect x="21.14" y="11.37" width="2.82" height="0.76" fill="#e0523a" /><rect x="21.57" y="12.67" width="2.06" height="1.84" fill="#d8442e" opacity="0.7"/><rect x="25.59" y="11.59" width="2.82" height="0.76" fill="#e0523a" /><rect x="26.02" y="12.89" width="2.06" height="1.84" fill="#d8442e" opacity="0.7"/><rect x="29.39" y="11.81" width="2.82" height="0.76" fill="#e0523a" /><rect x="29.82" y="13.11" width="2.06" height="1.84" fill="#d8442e" opacity="0.7"/><rect x="33.29" y="12.02" width="2.82" height="0.76" fill="#e0523a" /><rect x="33.73" y="13.33" width="2.06" height="1.84" fill="#d8442e" opacity="0.7"/><rect x="36.98" y="12.24" width="2.82" height="0.76" fill="#e0523a" /><rect x="37.42" y="13.54" width="2.06" height="1.84" fill="#d8442e" opacity="0.7"/></g></svg></div>
    <div class="badge g" style="left:660px;top:506px;width:58px"></div>
    <div class="hline" style="top:551px;background:#242427"></div>

  </div></section>

  <!-- toolbar -->
  <div class="input" style="left:1353px;top:202px;width:245px;height:38px"></div>
  <svg style="left:1366px;top:211px" width="20" height="20" viewBox="0 0 24 24" fill="none" stroke="#71717b" stroke-width="1.5" stroke-linecap="round" stroke-linejoin="round"><path d="m21 21-5.197-5.197m0 0A7.5 7.5 0 1 0 5.196 5.196a7.5 7.5 0 0 0 10.607 10.607Z"/></svg>
  <svg style="left:1613px;top:211px" width="20" height="20" viewBox="0 0 20 20" fill="#71717b"><path fill-rule="evenodd" clip-rule="evenodd" d="M2.628 1.601C5.028 1.206 7.49 1 10 1s4.973.206 7.372.601a.75.75 0 0 1 .628.74v2.288a2.25 2.25 0 0 1-.659 1.59l-4.682 4.683a2.25 2.25 0 0 0-.659 1.59v3.037c0 .684-.31 1.33-.844 1.757l-1.937 1.55A.75.75 0 0 1 8 18.25v-5.757a2.25 2.25 0 0 0-.659-1.591L2.659 6.22A2.25 2.25 0 0 1 2 4.629V2.34a.75.75 0 0 1 .628-.74Z"/></svg>
  <div class="abs" style="left:1633px;top:200px;width:16px;height:16px;border-radius:5px;background:#29292c;border:1px solid #3d3d41"></div>
  <svg style="left:1649px;top:211px" width="20" height="20" viewBox="0 0 20 20" fill="#71717b"><path d="M14 17h2.75A2.25 2.25 0 0 0 19 14.75v-9.5A2.25 2.25 0 0 0 16.75 3H14v14ZM12.5 3h-5v14h5V3ZM3.25 3H6v14H3.25A2.25 2.25 0 0 1 1 14.75v-9.5A2.25 2.25 0 0 1 3.25 3Z"/></svg>

  <!-- header sort chevrons -->
  <svg style="left:1309px;top:268px" width="20" height="20" viewBox="0 0 20 20" fill="#63636c"><path fill-rule="evenodd" clip-rule="evenodd" d="M5.22 8.22a.75.75 0 0 1 1.06 0L10 11.94l3.72-3.72a.75.75 0 1 1 1.06 1.06l-4.25 4.25a.75.75 0 0 1-1.06 0L5.22 9.28a.75.75 0 0 1 0-1.06Z"/></svg>
  <svg style="left:1408px;top:268px" width="20" height="20" viewBox="0 0 20 20" fill="#63636c"><path fill-rule="evenodd" clip-rule="evenodd" d="M5.22 8.22a.75.75 0 0 1 1.06 0L10 11.94l3.72-3.72a.75.75 0 1 1 1.06 1.06l-4.25 4.25a.75.75 0 0 1-1.06 0L5.22 9.28a.75.75 0 0 1 0-1.06Z"/></svg>

<span class="t" id="t0" style="left:24.32px;top:21.01px;font-size:21px;color:#ffffff;letter-spacing:-0.718px;font-weight:700;">Laravel</span>
<span class="t" id="t1" style="left:1585.61px;top:22.00px;font-size:14.7px;color:#71717b;letter-spacing:0.238px;">Search</span>
<span class="t" id="t7" style="left:477.32px;top:96.00px;font-size:13.9px;color:#9f9fa9;letter-spacing:0.717px;-webkit-text-stroke:0.22px #9f9fa9;">Article News</span>
<span class="t" id="t8" style="left:597.78px;top:96.00px;font-size:13.9px;color:#9f9fa9;letter-spacing:0.880px;-webkit-text-stroke:0.22px #9f9fa9;">List</span>
<span class="t" id="t9" style="left:476.86px;top:131.00px;font-size:30.4px;color:#ffffff;letter-spacing:-0.171px;font-weight:700;">Article News</span>
<span class="t" id="t10" style="left:1565.64px;top:132.01px;font-size:14.5px;color:#461901;letter-spacing:0.405px;-webkit-text-stroke:0.42px #461901;">New article news</span>
<span class="t" id="t11" style="left:1393.57px;top:212.01px;font-size:14.7px;color:#71717b;letter-spacing:0.216px;">Search</span>
<div id="glayer">
<span class="t" id="t2" style="left:56.34px;top:106.00px;font-size:14.2px;color:#e4e4e7;letter-spacing:0.581px;-webkit-text-stroke:0.3px #e4e4e7;">Dashboard</span>
<span class="t" id="t3" style="left:57.07px;top:150.00px;font-size:14.2px;color:#ffb900;letter-spacing:0.562px;-webkit-text-stroke:0.3px #ffb900;">Article News</span>
<span class="t" id="t4" style="left:57.19px;top:194.00px;font-size:14.2px;color:#e4e4e7;letter-spacing:0.637px;-webkit-text-stroke:0.3px #e4e4e7;">Authors</span>
<span class="t" id="t5" style="left:56.34px;top:238.00px;font-size:14.2px;color:#e4e4e7;letter-spacing:0.532px;-webkit-text-stroke:0.3px #e4e4e7;">Banner Advertisments</span>
<span class="t" id="t6" style="left:56.61px;top:282.00px;font-size:14.2px;color:#e4e4e7;letter-spacing:0.514px;-webkit-text-stroke:0.3px #e4e4e7;">Categories</span>
<span class="t" id="t12" style="left:1637.32px;top:199.00px;font-size:13.2px;color:#ffffff;letter-spacing:0.000px;-webkit-text-stroke:0.3px #ffffff;">0</span>
<span class="t" id="t13" style="left:540.08px;top:269.00px;font-size:14.7px;color:#ffffff;letter-spacing:0.162px;font-weight:700;">Name</span>
<span class="t" id="t14" style="left:1041.67px;top:269.00px;font-size:14.7px;color:#ffffff;letter-spacing:-0.271px;font-weight:700;">Thumbnail</span>
<span class="t" id="t15" style="left:1136.52px;top:269.00px;font-size:14.7px;color:#ffffff;letter-spacing:-0.077px;font-weight:700;">Is featured</span>
<span class="t" id="t16" style="left:1241.40px;top:269.00px;font-size:14.7px;color:#ffffff;letter-spacing:-0.134px;font-weight:700;">Category</span>
<span class="t" id="t17" style="left:1357.78px;top:269.00px;font-size:14.7px;color:#ffffff;letter-spacing:-0.345px;font-weight:700;">Author</span>
<span class="t" id="t18" style="left:1451.93px;top:269.00px;font-size:14.7px;color:#ffffff;letter-spacing:-0.112px;font-weight:700;">Slug</span>
<span class="t" id="t19" style="left:541.34px;top:332.00px;font-size:14.7px;color:#ffffff;letter-spacing:0.044px;-webkit-text-stroke:0.2px #ffffff;">Tesla is not a good Car</span>
<span class="t" id="t20" style="left:1241.36px;top:332.00px;font-size:14.7px;color:#ffffff;letter-spacing:0.059px;-webkit-text-stroke:0.2px #ffffff;">Economy</span>
<span class="t" id="t21" style="left:1357.61px;top:332.00px;font-size:14.7px;color:#ffffff;letter-spacing:-0.350px;-webkit-text-stroke:0.2px #ffffff;">Fila</span>
<span class="t" id="t22" style="left:1452.64px;top:332.00px;font-size:14.7px;color:#ffffff;letter-spacing:0.446px;-webkit-text-stroke:0.2px #ffffff;">tesla-is-not-a-good-car</span>
<span class="t" id="t23" style="left:1143.23px;top:332.01px;font-size:12.5px;color:#7bf1a8;letter-spacing:0.058px;-webkit-text-stroke:0.3px #7bf1a8;">featured</span>
<span class="t" id="t24" style="left:540.33px;top:405.00px;font-size:14.7px;color:#ffffff;letter-spacing:0.023px;-webkit-text-stroke:0.2px #ffffff;">Bycicle Run For 5 Times</span>
<span class="t" id="t25" style="left:1241.36px;top:405.00px;font-size:14.7px;color:#ffffff;letter-spacing:0.104px;-webkit-text-stroke:0.2px #ffffff;">Entertainment</span>
<span class="t" id="t26" style="left:1358.61px;top:405.00px;font-size:14.7px;color:#ffffff;letter-spacing:0.183px;-webkit-text-stroke:0.2px #ffffff;">Azi</span>
<span class="t" id="t27" style="left:1451.81px;top:405.00px;font-size:14.7px;color:#ffffff;letter-spacing:0.488px;-webkit-text-stroke:0.2px #ffffff;">bycicle-run-for-5-times</span>
<span class="t" id="t28" style="left:1143.23px;top:405.01px;font-size:12.5px;color:#7bf1a8;letter-spacing:0.058px;-webkit-text-stroke:0.3px #7bf1a8;">featured</span>
<span class="t" id="t29" style="left:541.34px;top:478.00px;font-size:14.7px;color:#ffffff;letter-spacing:0.120px;-webkit-text-stroke:0.2px #ffffff;">Trading is good and for aodjkaosma sdoadwoadjasodjamwdmaosdjoiaw</span>
<span class="t" id="t30" style="left:1241.36px;top:478.00px;font-size:14.7px;color:#ffffff;letter-spacing:0.104px;-webkit-text-stroke:0.2px #ffffff;">Entertainment</span>
<span class="t" id="t31" style="left:1358.14px;top:478.00px;font-size:14.7px;color:#ffffff;letter-spacing:0.082px;-webkit-text-stroke:0.2px #ffffff;">Yukiwa</span>
<span class="t" id="t32" style="left:1452.64px;top:478.00px;font-size:14.7px;color:#ffffff;letter-spacing:0.409px;-webkit-text-stroke:0.2px #ffffff;">trading-is-good-and-for-aodjkaosm</span>
<span class="t" id="t33" style="left:1690.70px;top:478.00px;font-size:14.7px;color:#ffffff;letter-spacing:0.050px;-webkit-text-stroke:0.2px #ffffff;">a-sdo</span>
<span class="t" id="t34" style="left:1142.32px;top:478.01px;font-size:12.5px;color:#ffb900;letter-spacing:-0.040px;-webkit-text-stroke:0.3px #ffb900;">not_featured</span>
<span class="t" id="t35" style="left:540.45px;top:551.00px;font-size:14.7px;color:#ffffff;letter-spacing:0.166px;-webkit-text-stroke:0.2px #ffffff;">Mclaren run faster than your mom</span>
<span class="t" id="t36" style="left:1241.25px;top:551.00px;font-size:14.7px;color:#ffffff;letter-spacing:0.108px;-webkit-text-stroke:0.2px #ffffff;">Business</span>
<span class="t" id="t37" style="left:1357.61px;top:551.00px;font-size:14.7px;color:#ffffff;letter-spacing:-0.225px;-webkit-text-stroke:0.2px #ffffff;">Rahmita</span>
<span class="t" id="t38" style="left:1451.76px;top:551.00px;font-size:14.7px;color:#ffffff;letter-spacing:0.399px;-webkit-text-stroke:0.2px #ffffff;">mclaren-run-faster-than-your-mom</span>
<span class="t" id="t39" style="left:1142.32px;top:551.01px;font-size:12.5px;color:#ffb900;letter-spacing:-0.040px;-webkit-text-stroke:0.3px #ffb900;">not_featured</span>
<span class="t" id="t40" style="left:541.34px;top:624.00px;font-size:14.7px;color:#ffffff;letter-spacing:0.164px;-webkit-text-stroke:0.2px #ffffff;">This is Automotive</span>
<span class="t" id="t41" style="left:1242.22px;top:624.00px;font-size:14.7px;color:#ffffff;letter-spacing:0.173px;-webkit-text-stroke:0.2px #ffffff;">Automotive</span>
<span class="t" id="t42" style="left:1357.49px;top:624.00px;font-size:14.7px;color:#ffffff;letter-spacing:0.299px;-webkit-text-stroke:0.2px #ffffff;">Bli</span>
<span class="t" id="t43" style="left:1452.64px;top:624.00px;font-size:14.7px;color:#ffffff;letter-spacing:0.376px;-webkit-text-stroke:0.2px #ffffff;">this-is-automotive</span>
<span class="t" id="t44" style="left:1142.32px;top:624.01px;font-size:12.5px;color:#ffb900;letter-spacing:-0.040px;-webkit-text-stroke:0.3px #ffb900;">not_featured</span>
<span class="t" id="t45" style="left:541.34px;top:697.00px;font-size:14.7px;color:#ffffff;letter-spacing:0.168px;-webkit-text-stroke:0.2px #ffffff;">Tesla start developing robot</span>
<span class="t" id="t46" style="left:1241.25px;top:697.00px;font-size:14.7px;color:#ffffff;letter-spacing:0.108px;-webkit-text-stroke:0.2px #ffffff;">Business</span>
<span class="t" id="t47" style="left:1357.61px;top:697.00px;font-size:14.7px;color:#ffffff;letter-spacing:-0.350px;-webkit-text-stroke:0.2px #ffffff;">Fila</span>
<span class="t" id="t48" style="left:1452.64px;top:697.00px;font-size:14.7px;color:#ffffff;letter-spacing:0.336px;-webkit-text-stroke:0.2px #ffffff;">tesla-start-developing-robot</span>
<span class="t" id="t49" style="left:1143.23px;top:697.01px;font-size:12.5px;color:#7bf1a8;letter-spacing:0.058px;-webkit-text-stroke:0.3px #7bf1a8;">featured</span>
</div>
  <div id="mask"></div>
  <div class="abs" style="left:1693px;top:201px;width:1px;height:560px;background:#222224;z-index:10"></div>
</div>
</body>
</html>
